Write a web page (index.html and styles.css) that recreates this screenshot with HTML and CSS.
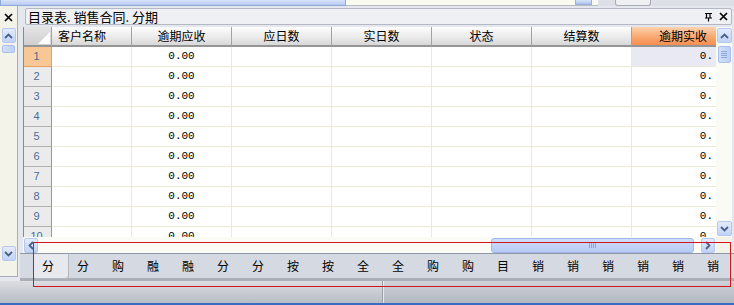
FILE: index.html
```html
<!DOCTYPE html>
<html lang="zh-CN">
<head>
  <meta charset="UTF-8">
  <title>目录表.销售合同.分期</title>
  <link rel="stylesheet" href="styles.css">
</head>
<body>

<div class="topbar">
  <div class="tb-field"></div>
  <div class="tb-combo"><span class="tb-drop"></span></div>
  <div class="tb-button"></div>
</div>

<div class="workspace">
  <!-- left docked panel -->
  <div class="side">
    <div class="side-head">
      <svg width="9" height="9" viewBox="0 0 9 9"><path d="M1 1L8 8M8 1L1 8" stroke="#000" stroke-width="1.7"/></svg>
    </div>
    <div class="side-scroll">
      <span class="sbtn"><svg width="9" height="6" viewBox="0 0 9 6"><path d="M1 5L4.5 1.5L8 5" fill="none" stroke="#4d6185" stroke-width="1.8"/></svg></span>
      <span class="vthumb side-thumb"></span>
      <span class="vtrack"></span>
      <span class="sbtn"><svg width="9" height="6" viewBox="0 0 9 6"><path d="M1 1L4.5 4.5L8 1" fill="none" stroke="#4d6185" stroke-width="1.8"/></svg></span>
    </div>
  </div>

  <div class="main">
    <div class="caption">
      <span class="caption-text">目录表. 销售合同. 分期</span>
      <span class="caption-tools">
        <svg width="9" height="10" viewBox="0 0 9 10"><path d="M1 1.5H8M2.5 1.5V6M6 1.5V6M1 6H8M4.5 6V9.5" fill="none" stroke="#000" stroke-width="1.2"/></svg>
        <svg width="9" height="9" viewBox="0 0 9 9"><path d="M1 1L8 8M8 1L1 8" stroke="#000" stroke-width="1.7"/></svg>
      </span>
    </div>

    <div class="grid-body">
      <div class="grid-view">
        <div class="grid">
          <div class="hd corner"><svg width="12" height="12" viewBox="0 0 12 12"><path d="M12 0V12H0Z" fill="#fff"/></svg></div>
          <div class="hd left">客户名称</div>
          <div class="hd">逾期应收</div>
          <div class="hd">应日数</div>
          <div class="hd">实日数</div>
          <div class="hd">状态</div>
          <div class="hd">结算数</div>
          <div class="hd hot">逾期实收</div>

          <div class="rn sel">1</div><div class="c"></div><div class="c num">0.00</div><div class="c"></div><div class="c"></div><div class="c"></div><div class="c"></div><div class="c last cur">0.</div>
          <div class="rn">2</div><div class="c"></div><div class="c num">0.00</div><div class="c"></div><div class="c"></div><div class="c"></div><div class="c"></div><div class="c last">0.</div>
          <div class="rn">3</div><div class="c"></div><div class="c num">0.00</div><div class="c"></div><div class="c"></div><div class="c"></div><div class="c"></div><div class="c last">0.</div>
          <div class="rn">4</div><div class="c"></div><div class="c num">0.00</div><div class="c"></div><div class="c"></div><div class="c"></div><div class="c"></div><div class="c last">0.</div>
          <div class="rn">5</div><div class="c"></div><div class="c num">0.00</div><div class="c"></div><div class="c"></div><div class="c"></div><div class="c"></div><div class="c last">0.</div>
          <div class="rn">6</div><div class="c"></div><div class="c num">0.00</div><div class="c"></div><div class="c"></div><div class="c"></div><div class="c"></div><div class="c last">0.</div>
          <div class="rn">7</div><div class="c"></div><div class="c num">0.00</div><div class="c"></div><div class="c"></div><div class="c"></div><div class="c"></div><div class="c last">0.</div>
          <div class="rn">8</div><div class="c"></div><div class="c num">0.00</div><div class="c"></div><div class="c"></div><div class="c"></div><div class="c"></div><div class="c last">0.</div>
          <div class="rn">9</div><div class="c"></div><div class="c num">0.00</div><div class="c"></div><div class="c"></div><div class="c"></div><div class="c"></div><div class="c last">0.</div>
          <div class="rn">10</div><div class="c"></div><div class="c num">0.00</div><div class="c"></div><div class="c"></div><div class="c"></div><div class="c"></div><div class="c last">0.</div>
        </div>
      </div>
      <div class="vscroll">
        <span class="sbtn wide"><svg width="9" height="6" viewBox="0 0 9 6"><path d="M1 5L4.5 1.5L8 5" fill="none" stroke="#4d6185" stroke-width="1.8"/></svg></span>
        <span class="vthumb grid-thumb"><i></i><i></i><i></i><i></i></span>
        <span class="vtrack"></span>
        <span class="sbtn wide"><svg width="9" height="6" viewBox="0 0 9 6"><path d="M1 1L4.5 4.5L8 1" fill="none" stroke="#4d6185" stroke-width="1.8"/></svg></span>
      </div>
    </div>

    <div class="hscroll-row">
      <div class="hscroll">
        <span class="sbtn"><svg width="6" height="9" viewBox="0 0 6 9"><path d="M5 1L1.5 4.5L5 8" fill="none" stroke="#4d6185" stroke-width="1.8"/></svg></span>
        <span class="hthumb"><i></i><i></i><i></i><i></i></span>
        <span class="sbtn"><svg width="6" height="9" viewBox="0 0 6 9"><path d="M1 1L4.5 4.5L1 8" fill="none" stroke="#4d6185" stroke-width="1.8"/></svg></span>
      </div>
      <div class="corner-box"></div>
    </div>

    <div class="tabs">
      <span class="tab active">分</span>
      <span class="tab">分</span>
      <span class="tab">购</span>
      <span class="tab">融</span>
      <span class="tab">融</span>
      <span class="tab">分</span>
      <span class="tab">分</span>
      <span class="tab">按</span>
      <span class="tab">按</span>
      <span class="tab">全</span>
      <span class="tab">全</span>
      <span class="tab">购</span>
      <span class="tab">购</span>
      <span class="tab">目</span>
      <span class="tab">销</span>
      <span class="tab">销</span>
      <span class="tab">销</span>
      <span class="tab">销</span>
      <span class="tab">销</span>
      <span class="tab">销</span>
    </div>
  </div>
</div>

<div class="status">
  <div class="status-cell"></div>
  <div class="status-cell rest"></div>
</div>
<div class="status-line"></div>

<div class="annot"></div>

</body>
</html>
```

FILE: styles.css
```css
body {
  margin: 0;
  width: 734px;
  height: 305px;
  overflow: hidden;
  position: relative;
  background-color: #e4e7ed;
  font-family: "Noto Sans CJK SC", sans-serif;
  font-size: 12px;
  color: #000;
}

/* top toolbar strip */
.topbar {
  height: 6px;
  display: flex;
  background-color: #dde0e6;
}
.tb-field {
  width: 346px;
  box-sizing: border-box;
  background: linear-gradient(#d6e2fa, #b6caf1);
  border: 1px solid #8fa9d9;
  border-top: none;
}
.tb-combo {
  width: 252px;
  box-sizing: border-box;
  background-color: #fbfaf1;
  border-bottom: 1px solid #b9bcc4;
  display: flex;
  justify-content: flex-end;
}
.tb-drop {
  width: 15px;
  margin-right: 6px;
  background: linear-gradient(#d6e2fa, #aec4f0);
  border: 1px solid #98b0e0;
  border-top: none;
}
.tb-button {
  width: 36px;
  margin-left: 17px;
  box-sizing: border-box;
  background-color: #eef0f3;
  border: 1px solid #a7abb3;
  border-top: none;
  border-radius: 0 0 3px 3px;
}

.workspace {
  display: flex;
  height: 275px;
}

/* left docked panel */
.side {
  width: 17px;
  height: 270px;
  margin-right: 2px;
  background-color: #f4f3ea;
  border-right: 1px solid #a6adba;
  border-bottom: 1px solid #a6adba;
  display: flex;
  flex-direction: column;
}
.side-head {
  height: 21px;
  display: flex;
  align-items: center;
  justify-content: center;
  padding-top: 2px;
  box-sizing: border-box;
}
.side-scroll {
  height: 233px;
  display: flex;
  flex-direction: column;
  align-items: center;
  padding-top: 1px;
}
.side-thumb {
  height: 8px;
  margin-top: 2px;
}

/* scrollbar parts */
.sbtn {
  width: 14px;
  height: 15px;
  flex: none;
  box-sizing: border-box;
  border: 1px solid #b7c8ee;
  border-radius: 2px;
  background: linear-gradient(#e4ecfd, #c0d2f6);
  display: flex;
  align-items: center;
  justify-content: center;
}
.sbtn.wide {
  width: 15px;
}
.vtrack {
  flex: 1;
}
.vthumb {
  width: 13px;
  box-sizing: border-box;
  border: 1px solid #a9bfec;
  border-radius: 2px;
  background: linear-gradient(90deg, #d3e0fb, #bccff6);
  display: flex;
  flex-direction: column;
  align-items: center;
  justify-content: center;
  gap: 1px;
}
.vthumb i {
  width: 6px;
  height: 1px;
  background-color: #8ea7d8;
}
.grid-thumb {
  height: 17px;
  margin-top: 3px;
}

.main {
  flex: 1;
  display: flex;
  flex-direction: column;
  padding-left: 3px;
}

/* panel caption */
.caption {
  height: 17px;
  margin: 2px 2px 2px 2px;
  box-sizing: border-box;
  border: 1px solid #b4b8c2;
  border-radius: 2px;
  background-color: #eef0f4;
  display: flex;
  align-items: center;
  justify-content: space-between;
  padding: 0 3px 0 2px;
}
.caption-text {
  font-size: 13px;
  line-height: 15px;
}
.caption-tools {
  display: flex;
  align-items: center;
  gap: 6px;
}

/* grid */
.grid-body {
  display: flex;
  height: 210px;
}
.grid-view {
  width: 693px;
  height: 210px;
  box-sizing: border-box;
  overflow: hidden;
  background-color: #fff;
  border-left: 1px solid #8a8a8a;
}
.grid {
  display: grid;
  grid-template-columns: 28px 80px repeat(5, 100px) 84px;
  grid-auto-rows: 20px;
}
.hd {
  box-sizing: border-box;
  background: linear-gradient(#fdfdfd, #ebebeb 55%, #d7d7d7);
  border-right: 1px solid #a3a3a3;
  border-bottom: 2px solid #959595;
  text-align: center;
  line-height: 18px;
  white-space: nowrap;
}
.hd.left {
  text-align: left;
  padding-left: 6px;
}
.hd.corner {
  background: linear-gradient(#e4e4e4, #cfcfcf);
  display: flex;
  align-items: flex-end;
  justify-content: flex-end;
  padding: 0 1px 1px 0;
}
.hd.hot {
  background: linear-gradient(#fdd2ad, #f9a46c 60%, #f68f52);
  border-right: none;
  text-align: right;
  padding-right: 9px;
}
.rn {
  box-sizing: border-box;
  background-color: #ebebeb;
  border-right: 1px solid #999;
  border-bottom: 1px solid #b0b0b0;
  text-align: center;
  line-height: 19px;
  font-family: "Liberation Sans", sans-serif;
  font-size: 11px;
  color: #4d6b99;
  padding-right: 2px;
}
.rn.sel {
  background-color: #f8c796;
  border-color: #e2a064;
}
.c {
  box-sizing: border-box;
  border-right: 1px solid #ece9d8;
  border-bottom: 1px solid #ece9d8;
  line-height: 19px;
  font-family: "Liberation Mono", monospace;
  font-size: 11px;
}
.c.num {
  text-align: center;
}
.c.last {
  text-align: right;
  padding-right: 3px;
  border-right: none;
}
.c.cur {
  background-color: #e8e9f3;
}

.vscroll {
  width: 16px;
  background-color: #fbfbf6;
  display: flex;
  flex-direction: column;
  align-items: center;
  padding: 1px 0 1px;
  box-sizing: border-box;
}

.hscroll-row {
  display: flex;
  height: 16px;
}
.hscroll {
  width: 693px;
  box-sizing: border-box;
  background-color: #fbfbf6;
  display: flex;
  align-items: center;
  padding: 0 1px;
}
.hthumb {
  width: 203px;
  height: 15px;
  margin-left: auto;
  margin-right: 7px;
  box-sizing: border-box;
  border: 1px solid #9fb7ea;
  border-radius: 3px;
  background: linear-gradient(#cfddfb, #b6cbf5);
  display: flex;
  align-items: center;
  justify-content: center;
  gap: 1px;
}
.hthumb i {
  width: 1px;
  height: 6px;
  background-color: #8ea7d8;
}
.corner-box {
  width: 16px;
  background-color: #f4f3ea;
}

/* worksheet tabs */
.tabs {
  height: 28px;
  margin-left: -3px;
  box-sizing: border-box;
  border-top: 1px solid #8f97a6;
  border-bottom: 3px solid #aaaeb7;
  background-color: #d5d9e1;
  display: flex;
  padding-left: 13px;
}
.tab {
  width: 35px;
  box-sizing: border-box;
  padding-left: 9px;
  line-height: 23px;
}
.tab.active {
  background-color: #e7e9ee;
  border-radius: 0 0 3px 3px;
  box-shadow: 1px 1px 0 #b3b7c0;
}

/* status bar */
.status {
  height: 22px;
  display: flex;
  background: linear-gradient(#dcdee3, #c9ccd2 50%, #b9bdc5);
}
.status-cell {
  width: 382px;
  border-right: 1px solid #9ea2aa;
}
.status-cell.rest {
  flex: 1;
  border-left: 1px solid #e6e8ec;
  border-right: none;
  background: linear-gradient(#cfd2d8, #b3b7bf);
}
.status-line {
  height: 2px;
  background-color: #3c6bc3;
}

/* red annotation frame */
.annot {
  position: absolute;
  left: 33px;
  top: 242px;
  width: 698px;
  height: 45px;
  box-sizing: border-box;
  border: 1px solid #d3161c;
}
```
